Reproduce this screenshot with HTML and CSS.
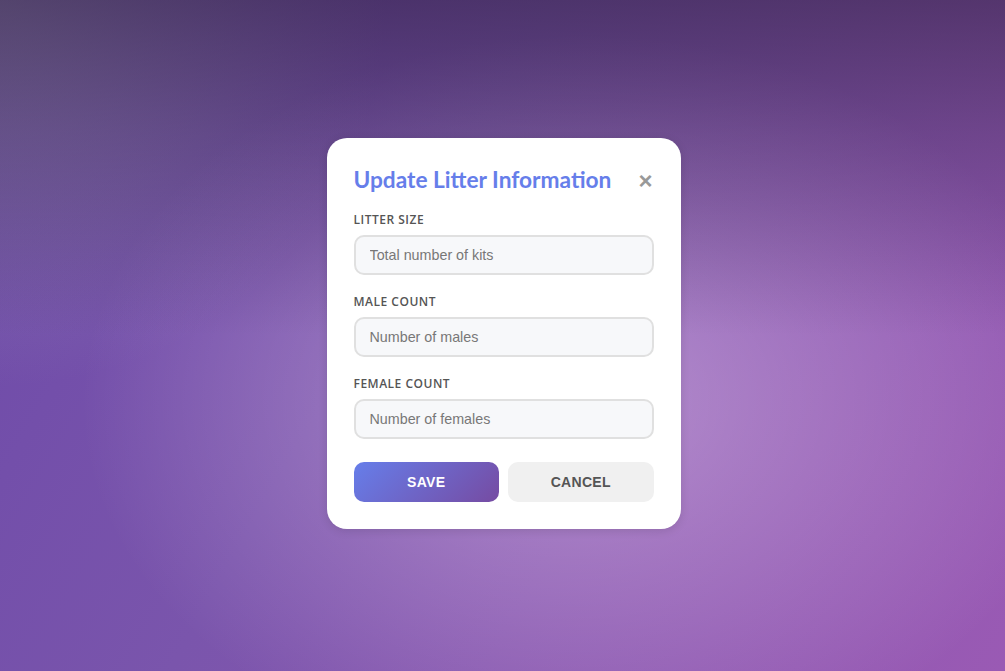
FILE: index.html
```html
<!DOCTYPE html>
<html lang="en">
<head>
    <meta charset="UTF-8">
    <title>Update Litter Information</title>
    <link rel="stylesheet" href="styles.css">
</head>
<body>
    <div class="overlay">
        <div class="modal">
            <div class="modal-head">
                <h2 class="modal-title">Update Litter Information</h2>
                <span class="close">&times;</span>
            </div>
            <div class="field">
                <label>Litter Size</label>
                <input type="text" placeholder="Total number of kits">
            </div>
            <div class="field">
                <label>Male Count</label>
                <input type="text" placeholder="Number of males">
            </div>
            <div class="field">
                <label>Female Count</label>
                <input type="text" placeholder="Number of females">
            </div>
            <div class="actions">
                <button class="btn btn-save">Save</button>
                <button class="btn btn-cancel">Cancel</button>
            </div>
        </div>
    </div>
</body>
</html>
```

FILE: styles.css
```css
*{margin: 0;padding: 0;box-sizing: border-box;}
html,body{height: 100%;}
body{font-family: "Open Sans", "Noto Sans", sans-serif;}

.overlay{
    height: 100%;
    display: flex;
    align-items: center;
    justify-content: center;
    padding: 0 0 5px 2px;
    background:
        linear-gradient(to bottom, rgba(40,25,55,0.55) 0%, rgba(40,25,55,0.3) 20%, rgba(40,25,55,0) 50%),
        radial-gradient(ellipse 50% 55% at 58% 60%, rgba(255,230,255,0.38), rgba(255,230,255,0) 100%),
        radial-gradient(circle at 0 0, rgba(160,160,180,0.55), rgba(160,160,180,0) 32%),
        linear-gradient(120deg, #6c49a8 0%, #7a55ac 40%, #9a5ab4 100%);
}

.modal{width: 354px;background: #fff;border-radius: 20px;padding: 28px 27px 27px;box-shadow: 0 2px 10px rgba(0,0,0,0.12);}

.modal-head{display: flex;justify-content: space-between;align-items: center;margin-bottom: 18px;}
.modal-title{font-family: Lato, sans-serif;font-size: 22.7px;font-weight: 700;color: #667eea;}
.close{font-family: "Liberation Sans", Arial, sans-serif;font-size: 24px;font-weight: 700;color: #999;line-height: 1;margin-right: 1px;margin-top: 3px;cursor: pointer;}

.field{margin-bottom: 18px;}
.field label{display: block;font-size: 12px;font-weight: 600;color: #555;text-transform: uppercase;letter-spacing: 0.5px;margin-bottom: 7px;}
.field input{width: 100%;height: 40px;border: 2px solid #e0e0e0;border-radius: 10px;background: #f7f8fa;padding: 0 14px;font-family: "Liberation Sans", Arial, sans-serif;font-size: 14.3px;color: #333;outline: none;}
.field input::placeholder{color: #777;}

.actions{display: flex;gap: 9px;margin-top: 23px;}
.btn{flex: 1;height: 40px;border: none;border-radius: 10px;font-family: "Liberation Sans", Arial, sans-serif;font-size: 14px;font-weight: 700;text-transform: uppercase;letter-spacing: 0.3px;cursor: pointer;}
.btn-save{background: linear-gradient(135deg, #667eea 0%, #764ba2 100%);color: #fff;}
.btn-cancel{background: #f0f0f0;color: #555;}
```
